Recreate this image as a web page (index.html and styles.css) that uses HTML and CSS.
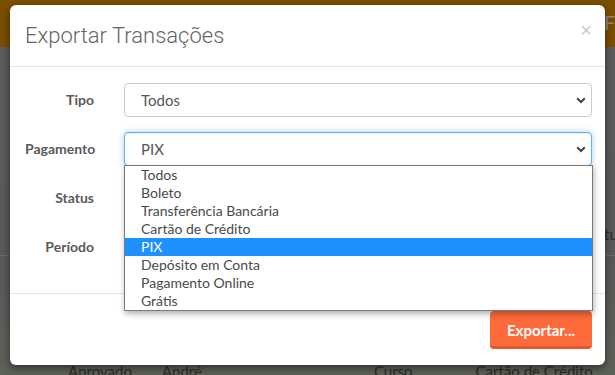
FILE: index.html
```html
<!DOCTYPE html>
<html lang="pt-BR">
<head>
<meta charset="utf-8">
<title>Exportar Transações</title>
<link rel="stylesheet" href="styles.css">
</head>
<body>
<div class="page">
  <div class="topbar"><span class="topbar-text">Fo</span></div>
  <div class="content">
    <div class="content-upper"><span class="side-text">tu</span></div>
    <div class="content-lower"></div>
    <div class="table-row">
      <span class="cell c1">Aprovado</span>
      <span class="cell c2">André</span>
      <span class="cell c3">Curso</span>
      <span class="cell c4">Cartão de Crédito</span>
    </div>
  </div>

  <div class="modal">
    <div class="modal-header">
      <h4 class="modal-title">Exportar Transações</h4>
      <span class="close">×</span>
    </div>
    <div class="modal-body">
      <div class="form-row">
        <label class="form-label">Tipo</label>
        <div class="select"><span>Todos</span><svg class="chev" width="10" height="7" viewBox="0 0 10 7"><path d="M1.2 1.3 L5 5 L8.8 1.3" fill="none" stroke="#444" stroke-width="2"/></svg></div>
      </div>
      <div class="form-row">
        <label class="form-label">Pagamento</label>
        <div class="select focused"><span>PIX</span><svg class="chev" width="10" height="7" viewBox="0 0 10 7"><path d="M1.2 1.3 L5 5 L8.8 1.3" fill="none" stroke="#444" stroke-width="2"/></svg></div>
      </div>
      <div class="form-row">
        <label class="form-label">Status</label>
        <div class="select"></div>
      </div>
      <div class="form-row">
        <label class="form-label">Período</label>
        <div class="select"></div>
      </div>
    </div>
    <div class="modal-footer">
      <button class="btn-export">Exportar...</button>
    </div>

    <ul class="dropdown">
      <li>Todos</li>
      <li>Boleto</li>
      <li>Transferência Bancária</li>
      <li>Cartão de Crédito</li>
      <li class="active">PIX</li>
      <li>Depósito em Conta</li>
      <li>Pagamento Online</li>
      <li>Grátis</li>
    </ul>
  </div>
</div>
</body>
</html>
```

FILE: styles.css
```css
* { box-sizing: border-box; }
html, body { margin: 0; padding: 0; }
body {
  width: 615px;
  height: 375px;
  overflow: hidden;
  font-family: Lato, "Open Sans", sans-serif;
}
.page {
  position: relative;
  width: 615px;
  height: 375px;
  background: #5c5c5c;
  overflow: hidden;
}
.topbar {
  height: 47px;
  background: #7b4f00;
  padding-left: 604px;
  white-space: nowrap;
}
.topbar-text {
  font-size: 20px;
  line-height: 44px;
  color: #8c8c8c;
}
.content { display: flex; flex-direction: column; }
.content-upper {
  height: 209px;
  background: linear-gradient(#5d5d5d, #5a5a5a);
  border-bottom: 1px solid #6a6a6a;
  padding-left: 604px;
  white-space: nowrap;
}
.side-text {
  display: block;
  margin-top: 178px;
  font-size: 15px;
  color: #2a2a2a;
}
.content-lower {
  height: 103px;
  background: linear-gradient(#595959, #5e605a);
}
.table-row {
  height: 20px;
  background: #5d6157;
  position: relative;
  white-space: nowrap;
  display: flex;
  font-size: 15px;
  color: #2b2b2b;
}
.cell { display: block; line-height: 16px; padding-top: 4px; }
.c1 { margin-left: 68px; }
.c2 { margin-left: 30px; }
.c3 { margin-left: 172px; }
.c4 { margin-left: 63px; }

.modal {
  position: absolute;
  left: 10px;
  top: 5px;
  width: 595px;
  height: 360px;
  background: #fff;
  border-radius: 6px;
  box-shadow: 0 3px 9px rgba(0,0,0,0.5);
}
.modal-header {
  height: 62px;
  border-bottom: 1px solid #e5e5e5;
  display: flex;
  align-items: center;
  justify-content: space-between;
  padding: 0 15px 0 15px;
}
.modal-title {
  margin: 0;
  font-family: Roboto, sans-serif;
  font-weight: 300;
  font-size: 22px;
  color: #666;
  padding-top: 0;
}
.close {
  font-family: "Liberation Sans", sans-serif;
  font-size: 20px;
  color: #c8c8c8;
  margin-top: -10px;
  margin-right: -2px;
}
.modal-body {
  padding: 16px 13px 29px 15px;
  display: flex;
  flex-direction: column;
  gap: 15px;
}
.form-row {
  display: grid;
  grid-template-columns: 69px 1fr;
  column-gap: 30px;
  align-items: center;
}
.form-label {
  text-align: right;
  font-weight: 700;
  font-size: 14px;
  color: #5a5a5a;
  margin-top: -2px;
}
.select {
  height: 34px;
  border: 1px solid #ccc;
  border-radius: 4px;
  padding: 0 5px 0 16px;
  display: flex;
  align-items: center;
  justify-content: space-between;
  font-size: 15px;
  color: #555;
  background: #fff;
}
.select.focused {
  border-color: #66afe9;
  box-shadow: inset 0 1px 1px rgba(0,0,0,0.075), 0 0 6px rgba(102,175,233,0.6);
}
.chev { display: block; }
.modal-footer {
  border-top: 1px solid #e5e5e5;
  padding: 17px 13px 15px 15px;
  display: flex;
  justify-content: flex-end;
}
.btn-export {
  width: 102px;
  height: 38px;
  border: 0;
  border-bottom: 3px solid #e2582a;
  border-radius: 4px;
  background: #ff6a3a;
  color: #fff;
  font-family: Lato, sans-serif;
  font-weight: 700;
  font-size: 15px;
  padding: 2px 0 0 0;
}
.dropdown {
  position: absolute;
  left: 114px;
  top: 160px;
  width: 469px;
  margin: 0;
  padding: 0;
  list-style: none;
  background: #fff;
  border: 1px solid #7a7a7a;
  box-shadow: 1px 3px 6px rgba(0,0,0,0.3);
}
.dropdown li {
  height: 18px;
  line-height: 18px;
  padding-left: 16px;
  font-size: 14px;
  color: #4a4a4a;
}
.dropdown li.active {
  background: #1e90ff;
  color: #fff;
}
```
